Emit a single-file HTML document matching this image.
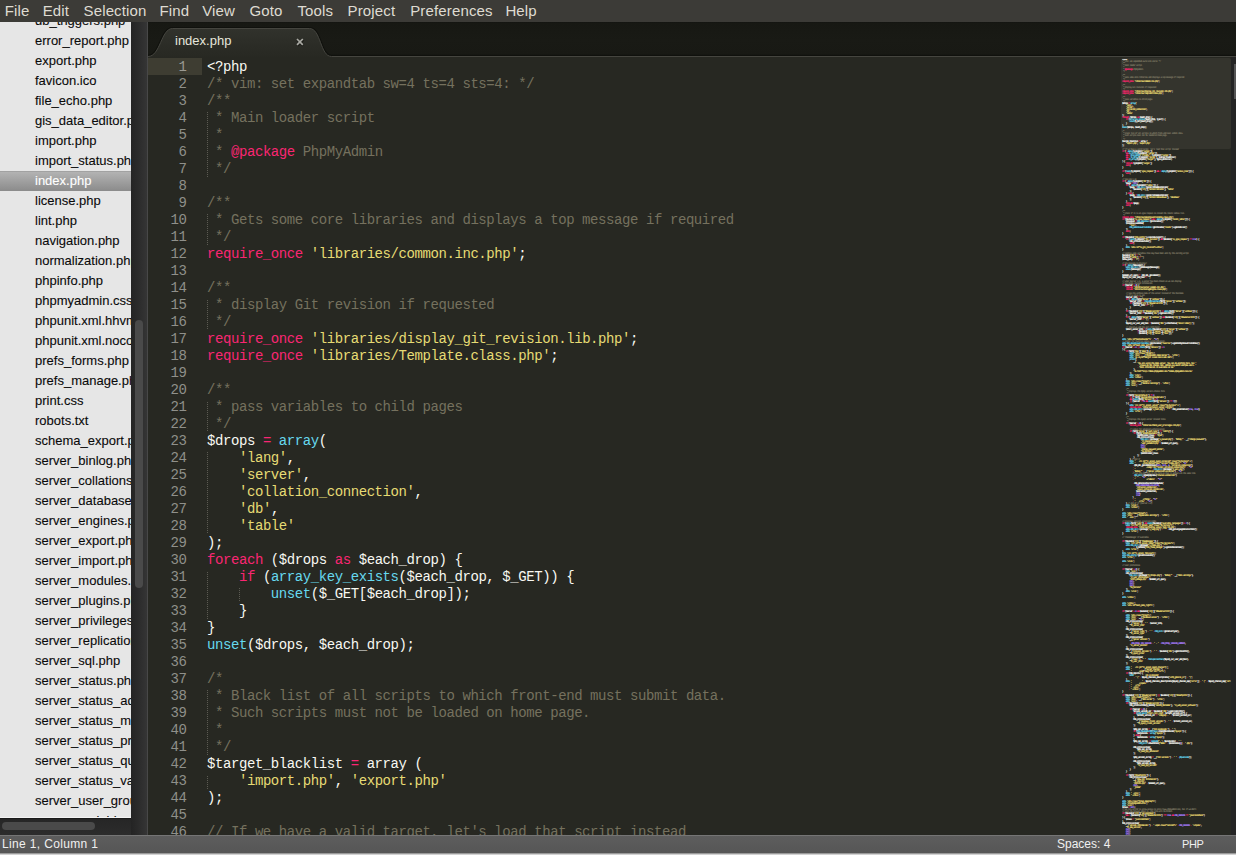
<!DOCTYPE html>
<html><head><meta charset="utf-8">
<style>
*{margin:0;padding:0;box-sizing:border-box}
html,body{width:1236px;height:855px;overflow:hidden;background:#272822}
body{position:relative;font-family:"Liberation Sans",sans-serif}
#menu{position:absolute;left:0;top:0;width:1236px;height:22px;background:#3c3b37}
#menu span{position:absolute;top:0;height:22px;line-height:22px;font-size:15px;letter-spacing:.15px;color:#dfdbd2;white-space:nowrap}
#side{position:absolute;left:0;top:22px;width:131px;height:795px;background:#e6e6e6;overflow:hidden}
#side .row{position:absolute;left:0;width:131px;height:20px;line-height:20px;padding-left:35px;font-size:13px;color:#0a0a0a;-webkit-text-stroke:0.1px #0a0a0a;white-space:nowrap;overflow:hidden}
#side .row.sel{background:linear-gradient(#a2a2a2 0,#a2a2a2 1px,#b3b3b3 1px,#8b8b8b);color:#fff;-webkit-text-stroke:0.1px #fff}
#sidelineW{position:absolute;left:0;top:817px;width:131px;height:1px;background:#f4f4f4}
#vstrip{position:absolute;left:131px;top:22px;width:16px;height:813px;background:linear-gradient(90deg,#242424,#2a2a2a 40%,#353535)}
#vline{position:absolute;left:147px;top:22px;width:1px;height:813px;background:#484848}
#vthumb{position:absolute;left:135px;top:320px;width:8px;height:268px;border-radius:4px;background:#4a4a4a}
#hstrip{position:absolute;left:0;top:818px;width:131px;height:17px;background:linear-gradient(#262626,#2c2c2c);border-top:1px solid #1a1a1a}
#hthumb{position:absolute;left:2px;top:822px;width:93px;height:8px;border-radius:4px;background:#4a4a4a}
#tabbar{position:absolute;left:148px;top:22px;width:1088px;height:36px;background:linear-gradient(#121310 0,#171813 1px,#191a15 50%,#181914 88%,#10110d 96%)}
#tabbar svg{position:absolute;left:0;top:0}
#tabtitle{position:absolute;left:175px;top:31px;height:20px;line-height:20px;font-size:13px;color:#e6e6dc;white-space:nowrap}
#tabx{position:absolute;left:293.5px;top:35.5px;width:12px;height:12px}
#editor{position:absolute;left:148px;top:57px;width:1088px;height:778px;background:#272822;overflow:hidden}
#curline{position:absolute;left:148px;top:58px;width:54px;height:17px;background:#3e3d32}
#gutter{position:absolute;left:148px;top:59px;width:38.5px;font-family:"Liberation Mono",monospace;font-size:14px;letter-spacing:-0.42px;line-height:17px;color:#8f908a;text-align:right}
#gutter .cur{color:#9a9a92}
#code{position:absolute;left:207px;top:59px;font-family:"Liberation Mono",monospace;font-size:14px;letter-spacing:-0.42px;line-height:17px;color:#f8f8f2;white-space:pre}
#code b{font-weight:normal}
.c{color:#75715e}.s{color:#e6db74}.k{color:#f92672}.f{color:#66d9ef}.n{color:#ae81ff}
#guides i{position:absolute;width:1px;background:repeating-linear-gradient(#5c5b53 0 1px,transparent 1px 2px)}
#mmbox{position:absolute;left:1121px;top:58px;width:110px;height:91px;background:#34342d;border-radius:2px}
#mmclip{position:absolute;left:1122px;top:58.5px;width:109px;height:777px;overflow:hidden}
#mmtext{position:absolute;left:0;top:0;font-family:"Liberation Mono",monospace;font-size:2.6px;letter-spacing:-0.62px;line-height:2px;color:#f8f8f2;white-space:pre;text-rendering:geometricPrecision;-webkit-text-stroke-width:0.12px}
#mmtext b{font-weight:normal}
#rscroll{position:absolute;left:1231px;top:57px;width:5px;height:778px;background:#242424}
#rthumb{position:absolute;left:1234px;top:64px;width:2px;height:35px;background:#555}
#status{position:absolute;left:0;top:835px;width:1236px;height:20px;background:linear-gradient(#5d5d5d,#565656 17px,#9a9a9a 17px,#9a9a9a 18px,#d2d2d2 18px);border-top:1px solid #757575}
#status span{position:absolute;top:0;height:17px;line-height:17px;font-size:12px;color:#f0f0f0;white-space:nowrap}
</style></head><body>
<div id="menu"><span style="left:4.8px">File</span><span style="left:42.7px">Edit</span><span style="left:83.5px">Selection</span><span style="left:159.5px">Find</span><span style="left:202.2px">View</span><span style="left:249.4px">Goto</span><span style="left:297.4px">Tools</span><span style="left:347.5px">Project</span><span style="left:410.2px">Preferences</span><span style="left:505.4px">Help</span></div>
<div id="side"><div class="row" style="top:-11px">db_triggers.php</div><div class="row" style="top:9px">error_report.php</div><div class="row" style="top:29px">export.php</div><div class="row" style="top:49px">favicon.ico</div><div class="row" style="top:69px">file_echo.php</div><div class="row" style="top:89px">gis_data_editor.php</div><div class="row" style="top:109px">import.php</div><div class="row" style="top:129px">import_status.php</div><div class="row sel" style="top:149px">index.php</div><div class="row" style="top:169px">license.php</div><div class="row" style="top:189px">lint.php</div><div class="row" style="top:209px">navigation.php</div><div class="row" style="top:229px">normalization.php</div><div class="row" style="top:249px">phpinfo.php</div><div class="row" style="top:269px">phpmyadmin.css.php</div><div class="row" style="top:289px">phpunit.xml.hhvm</div><div class="row" style="top:309px">phpunit.xml.nocoverage</div><div class="row" style="top:329px">prefs_forms.php</div><div class="row" style="top:349px">prefs_manage.php</div><div class="row" style="top:369px">print.css</div><div class="row" style="top:389px">robots.txt</div><div class="row" style="top:409px">schema_export.php</div><div class="row" style="top:429px">server_binlog.php</div><div class="row" style="top:449px">server_collations.php</div><div class="row" style="top:469px">server_databases.php</div><div class="row" style="top:489px">server_engines.php</div><div class="row" style="top:509px">server_export.php</div><div class="row" style="top:529px">server_import.php</div><div class="row" style="top:549px">server_modules.php</div><div class="row" style="top:569px">server_plugins.php</div><div class="row" style="top:589px">server_privileges.php</div><div class="row" style="top:609px">server_replication.php</div><div class="row" style="top:629px">server_sql.php</div><div class="row" style="top:649px">server_status.php</div><div class="row" style="top:669px">server_status_advisor.php</div><div class="row" style="top:689px">server_status_monitor.php</div><div class="row" style="top:709px">server_status_processes.php</div><div class="row" style="top:729px">server_status_queries.php</div><div class="row" style="top:749px">server_status_variables.php</div><div class="row" style="top:769px">server_user_groups.php</div><div class="row" style="top:789px">server_variables.php</div></div>
<div id="sidelineW"></div>
<div id="vstrip"></div><div id="vline"></div><div id="vthumb"></div>
<div id="hstrip"></div><div id="hthumb"></div>
<div id="tabbar"><svg width="1088" height="36" viewBox="0 0 1088 36">
<defs><linearGradient id="tg" x1="0" y1="0" x2="0" y2="1"><stop offset="0" stop-color="#31322c"/><stop offset="1" stop-color="#272822"/></linearGradient></defs>
<path d="M0 34.5 C12.5 34.5 13 6.5 24.5 6.5 L161.5 6.5 C173 6.5 172 34.5 183.5 34.5 L1088 34.5" fill="none" stroke="#10110d" stroke-width="3"/>
<path d="M0 34.5 C12.5 34.5 13 6.5 24.5 6.5 L161.5 6.5 C173 6.5 172 34.5 183.5 34.5 L1088 34.5 L1088 36 L0 36 Z" fill="url(#tg)" stroke="none"/>
<path d="M0 34.5 C12.5 34.5 13 6.5 24.5 6.5 L161.5 6.5 C173 6.5 172 34.5 183.5 34.5 L1088 34.5" fill="none" stroke="#45453f" stroke-width="1"/>
<rect x="0" y="35" width="1088" height="1" fill="#272822"/>
</svg></div>
<div id="tabtitle">index.php</div>
<svg id="tabx" width="12" height="12" viewBox="0 0 12 12"><path d="M3 3L8.8 8.8M8.8 3L3 8.8" stroke="#0f0f0c" stroke-width="2.6" opacity=".5" transform="translate(0.4 0.8)"/><path d="M3 3L8.8 8.8M8.8 3L3 8.8" stroke="#aaaaa4" stroke-width="1.7"/></svg>
<div id="editor"></div>
<div id="curline"></div>
<div id="gutter"><div class="cur">1</div><div>2</div><div>3</div><div>4</div><div>5</div><div>6</div><div>7</div><div>8</div><div>9</div><div>10</div><div>11</div><div>12</div><div>13</div><div>14</div><div>15</div><div>16</div><div>17</div><div>18</div><div>19</div><div>20</div><div>21</div><div>22</div><div>23</div><div>24</div><div>25</div><div>26</div><div>27</div><div>28</div><div>29</div><div>30</div><div>31</div><div>32</div><div>33</div><div>34</div><div>35</div><div>36</div><div>37</div><div>38</div><div>39</div><div>40</div><div>41</div><div>42</div><div>43</div><div>44</div><div>45</div><div>46</div></div>
<div id="guides"><i style="left:207px;top:112px;height:65px"></i><i style="left:207px;top:214px;height:31px"></i><i style="left:207px;top:300px;height:30px"></i><i style="left:207px;top:402px;height:30px"></i><i style="left:207px;top:452px;height:82px"></i><i style="left:207px;top:572px;height:47px"></i><i style="left:207px;top:690px;height:65px"></i><i style="left:207px;top:776px;height:13px"></i><i style="left:239px;top:588px;height:14px"></i></div>
<div id="code"><div>&lt;?php</div><div><b class="c">/* vim: set expandtab sw=4 ts=4 sts=4: */</b></div><div><b class="c">/**</b></div><div><b class="c"> * Main loader script</b></div><div><b class="c"> *</b></div><div><b class="c"> * </b><b class="k">@package</b><b class="c"> PhpMyAdmin</b></div><div><b class="c"> */</b></div><div>&#8203;</div><div><b class="c">/**</b></div><div><b class="c"> * Gets some core libraries and displays a top message if required</b></div><div><b class="c"> */</b></div><div><b class="k">require_once</b> <b class="s">&#x27;libraries/common.inc.php&#x27;</b>;</div><div>&#8203;</div><div><b class="c">/**</b></div><div><b class="c"> * display Git revision if requested</b></div><div><b class="c"> */</b></div><div><b class="k">require_once</b> <b class="s">&#x27;libraries/display_git_revision.lib.php&#x27;</b>;</div><div><b class="k">require_once</b> <b class="s">&#x27;libraries/Template.class.php&#x27;</b>;</div><div>&#8203;</div><div><b class="c">/**</b></div><div><b class="c"> * pass variables to child pages</b></div><div><b class="c"> */</b></div><div>$drops <b class="k">=</b> <b class="f">array</b>(</div><div>    <b class="s">&#x27;lang&#x27;</b>,</div><div>    <b class="s">&#x27;server&#x27;</b>,</div><div>    <b class="s">&#x27;collation_connection&#x27;</b>,</div><div>    <b class="s">&#x27;db&#x27;</b>,</div><div>    <b class="s">&#x27;table&#x27;</b></div><div>);</div><div><b class="k">foreach</b> ($drops <b class="k">as</b> $each_drop) {</div><div>    <b class="k">if</b> (<b class="f">array_key_exists</b>($each_drop, $_GET)) {</div><div>        <b class="f">unset</b>($_GET[$each_drop]);</div><div>    }</div><div>}</div><div><b class="f">unset</b>($drops, $each_drop);</div><div>&#8203;</div><div><b class="c">/*</b></div><div><b class="c"> * Black list of all scripts to which front-end must submit data.</b></div><div><b class="c"> * Such scripts must not be loaded on home page.</b></div><div><b class="c"> *</b></div><div><b class="c"> */</b></div><div>$target_blacklist <b class="k">=</b> array (</div><div>    <b class="s">&#x27;import.php&#x27;</b>, <b class="s">&#x27;export.php&#x27;</b></div><div>);</div><div>&#8203;</div><div><b class="c">// If we have a valid target, let&#x27;s load that script instead</b></div></div>
<div id="mmbox"></div>
<div id="mmclip"><div id="mmtext"><div>&lt;?php</div><div><b class="c">/* vim: set expandtab sw=4 ts=4 sts=4: */</b></div><div><b class="c">/**</b></div><div><b class="c"> * Main loader script</b></div><div><b class="c"> *</b></div><div><b class="c"> * </b><b class="k">@package</b><b class="c"> PhpMyAdmin</b></div><div><b class="c"> */</b></div><div>&#8203;</div><div><b class="c">/**</b></div><div><b class="c"> * Gets some core libraries and displays a top message if required</b></div><div><b class="c"> */</b></div><div><b class="k">require_once</b> <b class="s">&#x27;libraries/common.inc.php&#x27;</b>;</div><div>&#8203;</div><div><b class="c">/**</b></div><div><b class="c"> * display Git revision if requested</b></div><div><b class="c"> */</b></div><div><b class="k">require_once</b> <b class="s">&#x27;libraries/display_git_revision.lib.php&#x27;</b>;</div><div><b class="k">require_once</b> <b class="s">&#x27;libraries/Template.class.php&#x27;</b>;</div><div>&#8203;</div><div><b class="c">/**</b></div><div><b class="c"> * pass variables to child pages</b></div><div><b class="c"> */</b></div><div>$drops <b class="k">=</b> <b class="f">array</b>(</div><div>    <b class="s">&#x27;lang&#x27;</b>,</div><div>    <b class="s">&#x27;server&#x27;</b>,</div><div>    <b class="s">&#x27;collation_connection&#x27;</b>,</div><div>    <b class="s">&#x27;db&#x27;</b>,</div><div>    <b class="s">&#x27;table&#x27;</b></div><div>);</div><div><b class="k">foreach</b> ($drops <b class="k">as</b> $each_drop) {</div><div>    <b class="k">if</b> (<b class="f">array_key_exists</b>($each_drop, $_GET)) {</div><div>        <b class="f">unset</b>($_GET[$each_drop]);</div><div>    }</div><div>}</div><div><b class="f">unset</b>($drops, $each_drop);</div><div>&#8203;</div><div><b class="c">/*</b></div><div><b class="c"> * Black list of all scripts to which front-end must submit data.</b></div><div><b class="c"> * Such scripts must not be loaded on home page.</b></div><div><b class="c"> *</b></div><div><b class="c"> */</b></div><div>$target_blacklist <b class="k">=</b> array (</div><div>    <b class="s">&#x27;import.php&#x27;</b>, <b class="s">&#x27;export.php&#x27;</b></div><div>);</div><div>&#8203;</div><div><b class="c">// If we have a valid target, let&#x27;s load that script instead</b></div><div><b class="k">if</b> (<b class="k">!</b> <b class="f">empty</b>($_REQUEST[<b class="s">&#x27;target&#x27;</b>])</div><div>    <b class="k">&amp;&amp;</b> <b class="f">is_string</b>($_REQUEST[<b class="s">&#x27;target&#x27;</b>])</div><div>    <b class="k">&amp;&amp;</b> <b class="k">!</b> <b class="f">preg_match</b>(<b class="s">&#x27;/^index/&#x27;</b>, $_REQUEST[<b class="s">&#x27;target&#x27;</b>])</div><div>    <b class="k">&amp;&amp;</b> <b class="k">!</b> <b class="f">in_array</b>($_REQUEST[<b class="s">&#x27;target&#x27;</b>], $target_blacklist)</div><div>    <b class="k">&amp;&amp;</b> <b class="f">in_array</b>($_REQUEST[<b class="s">&#x27;target&#x27;</b>], $goto_whitelist)</div><div>) {</div><div>    <b class="k">include</b> $_REQUEST[<b class="s">&#x27;target&#x27;</b>];</div><div>    <b class="k">exit</b>;</div><div>}</div><div>&#8203;</div><div><b class="k">if</b> (<b class="f">isset</b>($_REQUEST[<b class="s">&#x27;ajax_request&#x27;</b>]) <b class="k">&amp;&amp;</b> <b class="k">!</b> <b class="f">empty</b>($_REQUEST[<b class="s">&#x27;access_time&#x27;</b>])) {</div><div>    <b class="k">exit</b>;</div><div>}</div><div>&#8203;</div><div><b class="c">// See FAQ 1.34</b></div><div><b class="k">if</b> (<b class="k">!</b> <b class="f">empty</b>($_REQUEST[<b class="s">&#x27;db&#x27;</b>])) {</div><div>    $page <b class="k">=</b> <b class="n">null</b>;</div><div>    <b class="k">if</b> (<b class="k">!</b> <b class="f">empty</b>($_REQUEST[<b class="s">&#x27;table&#x27;</b>])) {</div><div>        $page <b class="k">=</b> <b class="f">PMA_Util</b>::getScriptNameForOption(</div><div>            $GLOBALS[<b class="s">&#x27;cfg&#x27;</b>][<b class="s">&#x27;DefaultTabTable&#x27;</b>], <b class="s">&#x27;table&#x27;</b></div><div>        );</div><div>    } <b class="k">else</b> {</div><div>        $page <b class="k">=</b> <b class="f">PMA_Util</b>::getScriptNameForOption(</div><div>            $GLOBALS[<b class="s">&#x27;cfg&#x27;</b>][<b class="s">&#x27;DefaultTabDatabase&#x27;</b>], <b class="s">&#x27;database&#x27;</b></div><div>        );</div><div>    }</div><div>    <b class="k">include</b> $page;</div><div>    <b class="k">exit</b>;</div><div>}</div><div>&#8203;</div><div><b class="c">/**</b></div><div><b class="c"> * Check if it is an ajax request to reload the recent tables list.</b></div><div><b class="c"> */</b></div><div><b class="k">require_once</b> <b class="s">&#x27;libraries/RecentFavoriteTable.class.php&#x27;</b>;</div><div><b class="k">if</b> ($GLOBALS[<b class="s">&#x27;is_ajax_request&#x27;</b>] <b class="k">&amp;&amp;</b> <b class="k">!</b> <b class="f">empty</b>($_REQUEST[<b class="s">&#x27;recent_table&#x27;</b>])) {</div><div>    $response <b class="k">=</b> <b class="f">PMA_Response</b>::getInstance();</div><div>    $response-&gt;addJSON(</div><div>        <b class="s">&#x27;list&#x27;</b>,</div><div>        <b class="f">PMA_RecentFavoriteTable</b>::getInstance(<b class="s">&#x27;recent&#x27;</b>)-&gt;getHtmlList()</div><div>    );</div><div>    <b class="k">exit</b>;</div><div>}</div><div>&#8203;</div><div><b class="k">if</b> ($GLOBALS[<b class="s">&#x27;PMA_Config&#x27;</b>]-&gt;isGitRevision()) {</div><div>    <b class="k">if</b> (<b class="f">isset</b>($_REQUEST[<b class="s">&#x27;git_revision&#x27;</b>]) <b class="k">&amp;&amp;</b> $GLOBALS[<b class="s">&#x27;is_ajax_request&#x27;</b>] <b class="k">==</b> <b class="n">true</b>) {</div><div>        PMA_printGitRevision();</div><div>        <b class="k">exit</b>;</div><div>    }</div><div>    <b class="f">echo</b> <b class="s">&#x27;&lt;div id=&quot;is_git_revision&quot;&gt;&lt;/div&gt;&#x27;</b>;</div><div>}</div><div>&#8203;</div><div><b class="c">// Handles some variables that may have been sent by the calling script</b></div><div>$GLOBALS[<b class="s">&#x27;db&#x27;</b>] <b class="k">=</b> <b class="s">&#x27;&#x27;</b>;</div><div>$GLOBALS[<b class="s">&#x27;table&#x27;</b>] <b class="k">=</b> <b class="s">&#x27;&#x27;</b>;</div><div>$show_query <b class="k">=</b> <b class="s">&#x27;1&#x27;</b>;</div><div>&#8203;</div><div><b class="c">// Any message to display?</b></div><div><b class="k">if</b> (<b class="k">!</b> <b class="f">empty</b>($message)) {</div><div>    <b class="f">echo</b> <b class="f">PMA_Util</b>::getMessage($message);</div><div>    <b class="f">unset</b>($message);</div><div>}</div><div>&#8203;</div><div>$common_url_query <b class="k">=</b>  PMA_URL_getCommon();</div><div>$mysql_cur_user_and_host <b class="k">=</b> <b class="s">&#x27;&#x27;</b>;</div><div>&#8203;</div><div><b class="c">// when $server &gt; 0, a server has been chosen so we can display</b></div><div><b class="c">// all MySQL-related information</b></div><div><b class="k">if</b> ($server <b class="k">&gt;</b> <b class="n">0</b>) {</div><div>    <b class="k">include</b> <b class="s">&#x27;libraries/server_common.inc.php&#x27;</b>;</div><div>    <b class="k">include</b> <b class="s">&#x27;libraries/StorageEngine.class.php&#x27;</b>;</div><div>&#8203;</div><div>    <b class="c">// Use the verbose name of the server instead of the hostname</b></div><div>    <b class="c">// if a value is set</b></div><div>    $server_info <b class="k">=</b> <b class="s">&#x27;&#x27;</b>;</div><div>    <b class="k">if</b> (<b class="k">!</b> <b class="f">empty</b>($cfg[<b class="s">&#x27;Server&#x27;</b>][<b class="s">&#x27;verbose&#x27;</b>])) {</div><div>        $server_info <b class="k">.=</b> <b class="f">htmlspecialchars</b>($cfg[<b class="s">&#x27;Server&#x27;</b>][<b class="s">&#x27;verbose&#x27;</b>]);</div><div>        <b class="k">if</b> ($GLOBALS[<b class="s">&#x27;cfg&#x27;</b>][<b class="s">&#x27;ShowServerInfo&#x27;</b>]) {</div><div>            $server_info <b class="k">.=</b> <b class="s">&#x27; (&#x27;</b>;</div><div>        }</div><div>    }</div><div>    <b class="k">if</b> ($GLOBALS[<b class="s">&#x27;cfg&#x27;</b>][<b class="s">&#x27;ShowServerInfo&#x27;</b>] <b class="k">||</b> <b class="f">empty</b>($cfg[<b class="s">&#x27;Server&#x27;</b>][<b class="s">&#x27;verbose&#x27;</b>])) {</div><div>        $server_info <b class="k">.=</b> $GLOBALS[<b class="s">&#x27;dbi&#x27;</b>]-&gt;getHostInfo();</div><div>    }</div><div>    <b class="k">if</b> (<b class="k">!</b> <b class="f">empty</b>($cfg[<b class="s">&#x27;Server&#x27;</b>][<b class="s">&#x27;verbose&#x27;</b>]) <b class="k">&amp;&amp;</b> $GLOBALS[<b class="s">&#x27;cfg&#x27;</b>][<b class="s">&#x27;ShowServerInfo&#x27;</b>]) {</div><div>        $server_info <b class="k">.=</b> <b class="s">&#x27;)&#x27;</b>;</div><div>    }</div><div>    $mysql_cur_user_and_host <b class="k">=</b> $GLOBALS[<b class="s">&#x27;dbi&#x27;</b>]-&gt;fetchValue(<b class="s">&#x27;SELECT USER();&#x27;</b>);</div><div>&#8203;</div><div>    <b class="c">// should we add the port info here?</b></div><div>    $short_server_info <b class="k">=</b> (<b class="k">!</b><b class="f">empty</b>($GLOBALS[<b class="s">&#x27;cfg&#x27;</b>][<b class="s">&#x27;Server&#x27;</b>][<b class="s">&#x27;verbose&#x27;</b>])</div><div>                <b class="k">?</b> $GLOBALS[<b class="s">&#x27;cfg&#x27;</b>][<b class="s">&#x27;Server&#x27;</b>][<b class="s">&#x27;verbose&#x27;</b>]</div><div>                <b class="k">:</b> $GLOBALS[<b class="s">&#x27;cfg&#x27;</b>][<b class="s">&#x27;Server&#x27;</b>][<b class="s">&#x27;host&#x27;</b>]);</div><div>}</div><div>&#8203;</div><div><b class="f">echo</b> <b class="s">&#x27;&lt;div id=&quot;maincontainer&quot;&gt;&#x27;</b> <b class="k">.</b> <b class="s">&quot;</b><b class="n">\n</b><b class="s">&quot;</b>;</div><div><b class="c">// Anchor for favorite tables synchronization.</b></div><div><b class="f">echo</b> <b class="f">PMA_RecentFavoriteTable</b>::getInstance(<b class="s">&#x27;favorite&#x27;</b>)-&gt;getHtmlSyncFavoriteTables();</div><div><b class="f">echo</b> <b class="s">&#x27;&lt;div id=&quot;main_pane_left&quot;&gt;&#x27;</b>;</div><div><b class="k">if</b> ($server <b class="k">&gt;</b> <b class="n">0</b> <b class="k">||</b> <b class="f">count</b>($cfg[<b class="s">&#x27;Servers&#x27;</b>]) <b class="k">&gt;</b> <b class="n">1</b></div><div>) {</div><div>    <b class="k">if</b> ($cfg[<b class="s">&#x27;DBG&#x27;</b>][<b class="s">&#x27;demo&#x27;</b>]) {</div><div>        <b class="f">echo</b> <b class="s">&#x27;&lt;div class=&quot;group&quot;&gt;&#x27;</b>;</div><div>        <b class="f">echo</b> <b class="s">&#x27;&lt;h2&gt;&#x27;</b> <b class="k">.</b> __(<b class="s">&#x27;phpMyAdmin Demo Server&#x27;</b>) <b class="k">.</b> <b class="s">&#x27;&lt;/h2&gt;&#x27;</b>;</div><div>        <b class="f">echo</b> <b class="s">&#x27;&lt;p style=&quot;margin: 0.5em 1em 0.5em 1em&quot;&gt;&#x27;</b>;</div><div>        <b class="f">printf</b>(</div><div>            __(</div><div>                <b class="s">&#x27;You are using the demo server. You can do anything here, but &#x27;</b></div><div>                <b class="k">.</b> <b class="s">&#x27;please do not change root, debian-sys-maint and pma users. &#x27;</b></div><div>                <b class="k">.</b> <b class="s">&#x27;More information is available at %s.&#x27;</b></div><div>            ),</div><div>            <b class="s">&#x27;&lt;a hraf=&quot;xttp://demo.phpmyadmin.net/&quot;&gt;demo.phpmyadmin.net&lt;/a&gt;&#x27;</b></div><div>        );</div><div>        <b class="f">echo</b> <b class="s">&#x27;&lt;/p&gt;&#x27;</b>;</div><div>        <b class="f">echo</b> <b class="s">&#x27;&lt;/div&gt;&#x27;</b>;</div><div>    }</div><div>    <b class="f">echo</b> <b class="s">&#x27;&lt;div class=&quot;group&quot;&gt;&#x27;</b>;</div><div>    <b class="f">echo</b> <b class="s">&#x27;&lt;h2&gt;&#x27;</b> <b class="k">.</b> __(<b class="s">&#x27;General settings&#x27;</b>) <b class="k">.</b> <b class="s">&#x27;&lt;/h2&gt;&#x27;</b>;</div><div>    <b class="f">echo</b> <b class="s">&#x27;&lt;ul&gt;&#x27;</b>;</div><div>&#8203;</div><div>    <b class="c">/**</b></div><div><b class="c">     * Displays the MySQL servers choice form</b></div><div><b class="c">     */</b></div><div>    <b class="k">if</b> ($cfg[<b class="s">&#x27;ServerDefault&#x27;</b>] <b class="k">==</b> <b class="n">0</b></div><div>        <b class="k">||</b> (<b class="k">!</b> $cfg[<b class="s">&#x27;NavigationDisplayServers&#x27;</b>]</div><div>        <b class="k">&amp;&amp;</b> (<b class="f">count</b>($cfg[<b class="s">&#x27;Servers&#x27;</b>]) <b class="k">&gt;</b> <b class="n">1</b></div><div>        <b class="k">||</b> ($server <b class="k">==</b> <b class="n">0</b> <b class="k">&amp;&amp;</b> <b class="f">count</b>($cfg[<b class="s">&#x27;Servers&#x27;</b>]) <b class="k">==</b> <b class="n">1</b>)))</div><div>    ) {</div><div>        <b class="f">echo</b> <b class="s">&#x27;&lt;li id=&quot;li_select_server&quot; class=&quot;no_bullets&quot; &gt;&#x27;</b>;</div><div>        <b class="k">include_once</b> <b class="s">&#x27;libraries/select_server.lib.php&#x27;</b>;</div><div>        <b class="f">echo</b> <b class="f">PMA_Util</b>::getImage(<b class="s">&#x27;s_host.png&#x27;</b>) <b class="k">.</b> <b class="s">&quot; &quot;</b> <b class="k">.</b> PMA_selectServer(<b class="n">true</b>, <b class="n">true</b>);</div><div>        <b class="f">echo</b> <b class="s">&#x27;&lt;/li&gt;&#x27;</b>;</div><div>    }</div><div>&#8203;</div><div>    <b class="c">/**</b></div><div><b class="c">     * Displays the mysql server related links</b></div><div><b class="c">     */</b></div><div>    <b class="k">if</b> ($server <b class="k">&gt;</b> <b class="n">0</b>) {</div><div>        <b class="k">include_once</b> <b class="s">&#x27;libraries/check_user_privileges.lib.php&#x27;</b>;</div><div>&#8203;</div><div>        <b class="c">// Logout for advanced authentication</b></div><div>        <b class="k">if</b> ($cfg[<b class="s">&#x27;Server&#x27;</b>][<b class="s">&#x27;auth_type&#x27;</b>] <b class="k">!=</b> <b class="s">&#x27;config&#x27;</b>) {</div><div>            <b class="k">if</b> ($cfg[<b class="s">&#x27;ShowChgPassword&#x27;</b>]) {</div><div>                $conditional_class <b class="k">=</b> <b class="s">&#x27;ajax&#x27;</b>;</div><div>                PMA_printListItem(</div><div>                    <b class="f">PMA_Util</b>::getImage(<b class="s">&#x27;s_passwd.png&#x27;</b>) <b class="k">.</b> <b class="s">&quot;&amp;nbsp;&quot;</b> <b class="k">.</b> __(<b class="s">&#x27;Change password&#x27;</b>),</div><div>                    <b class="s">&#x27;li_change_password&#x27;</b>,</div><div>                    <b class="s">&#x27;user_password.php&#x27;</b> <b class="k">.</b> $common_url_query,</div><div>                    <b class="n">null</b>,</div><div>                    <b class="n">null</b>,</div><div>                    <b class="s">&#x27;change_password_anchor&#x27;</b>,</div><div>                    <b class="s">&quot;no_bullets&quot;</b>,</div><div>                    $conditional_class</div><div>                );</div><div>            }</div><div>        } <b class="c">// end if</b></div><div>        <b class="f">echo</b> <b class="s">&#x27;    &lt;li id=&quot;li_select_mysql_collation&quot; class=&quot;no_bullets&quot; &gt;&#x27;</b>;</div><div>        <b class="f">echo</b> <b class="s">&#x27;        &lt;form method=&quot;post&quot; action=&quot;index.php&quot;&gt;&#x27;</b> <b class="k">.</b> <b class="s">&quot;</b><b class="n">\n</b><b class="s">&quot;</b></div><div>           <b class="k">.</b> PMA_URL_getHiddenInputs(<b class="n">null</b>, <b class="n">null</b>, <b class="n">4</b>, <b class="s">&#x27;collation_connection&#x27;</b>)</div><div>           <b class="k">.</b> <b class="s">&#x27;            &lt;label for=&quot;select_collation_connection&quot;&gt;&#x27;</b> <b class="k">.</b> <b class="s">&quot;</b><b class="n">\n</b><b class="s">&quot;</b></div><div>           <b class="k">.</b> <b class="s">&#x27;                &#x27;</b> <b class="k">.</b> <b class="f">PMA_Util</b>::getImage(<b class="s">&#x27;s_asci.png&#x27;</b>)</div><div>           <b class="k">.</b> <b class="s">&quot;&amp;nbsp;&quot;</b> <b class="k">.</b> __(<b class="s">&#x27;Server connection collation&#x27;</b>) <b class="k">.</b> <b class="s">&quot;</b><b class="n">\n</b><b class="s">&quot;</b></div><div>           <b class="c">// put the doc link in the form so that it appears on the same line</b></div><div>           <b class="k">.</b> <b class="f">PMA_Util</b>::showMySQLDocu(<b class="s">&#x27;Charset-connection&#x27;</b>)</div><div>           <b class="k">.</b> <b class="s">&#x27;: &#x27;</b> <b class="k">.</b>  <b class="s">&quot;</b><b class="n">\n</b><b class="s">&quot;</b></div><div>           <b class="k">.</b> <b class="s">&#x27;            &lt;/label&gt;&#x27;</b> <b class="k">.</b> <b class="s">&quot;</b><b class="n">\n</b><b class="s">&quot;</b></div><div>&#8203;</div><div>           <b class="k">.</b> PMA_generateCharsetDropdownBox(</div><div>               <b class="n">PMA_CSDROPDOWN_COLLATION</b>,</div><div>               <b class="s">&#x27;collation_connection&#x27;</b>,</div><div>               <b class="s">&#x27;select_collation_connection&#x27;</b>,</div><div>               $collation_connection,</div><div>               <b class="n">true</b>,</div><div>               <b class="n">true</b></div><div>           )</div><div>           <b class="k">.</b> <b class="s">&#x27;        &lt;/form&gt;&#x27;</b> <b class="k">.</b> <b class="s">&quot;</b><b class="n">\n</b><b class="s">&quot;</b></div><div>           <b class="k">.</b> <b class="s">&#x27;    &lt;/li&gt;&#x27;</b> <b class="k">.</b> <b class="s">&quot;</b><b class="n">\n</b><b class="s">&quot;</b>;</div><div>    } <b class="c">// end of if ($server &gt; 0)</b></div><div>    <b class="f">echo</b> <b class="s">&#x27;&lt;/ul&gt;&#x27;</b>;</div><div>    <b class="f">echo</b> <b class="s">&#x27;&lt;/div&gt;&#x27;</b>;</div><div>}</div><div>&#8203;</div><div><b class="f">echo</b> <b class="s">&#x27;&lt;div class=&quot;group&quot;&gt;&#x27;</b>;</div><div><b class="f">echo</b> <b class="s">&#x27;&lt;h2&gt;&#x27;</b> <b class="k">.</b> __(<b class="s">&#x27;Appearance settings&#x27;</b>) <b class="k">.</b> <b class="s">&#x27;&lt;/h2&gt;&#x27;</b>;</div><div><b class="f">echo</b> <b class="s">&#x27;  &lt;ul&gt;&#x27;</b>;</div><div>&#8203;</div><div><b class="c">// Displays language selection combo</b></div><div><b class="k">if</b> (<b class="f">empty</b>($cfg[<b class="s">&#x27;Lang&#x27;</b>]) <b class="k">&amp;&amp;</b> <b class="f">count</b>($GLOBALS[<b class="s">&#x27;available_languages&#x27;</b>]) <b class="k">&gt;</b> <b class="n">1</b>) {</div><div>    <b class="f">echo</b> <b class="s">&#x27;&lt;li id=&quot;li_select_lang&quot; class=&quot;no_bullets&quot;&gt;&#x27;</b>;</div><div>    <b class="k">include_once</b> <b class="s">&#x27;libraries/display_select_lang.lib.php&#x27;</b>;</div><div>    <b class="f">echo</b> <b class="f">PMA_Util</b>::getImage(<b class="s">&#x27;s_lang.png&#x27;</b>) <b class="k">.</b> <b class="s">&quot; &quot;</b> <b class="k">.</b> PMA_getLanguageSelectorHtml();</div><div>    <b class="f">echo</b> <b class="s">&#x27;&lt;/li&gt;&#x27;</b>;</div><div>}</div><div>&#8203;</div><div><b class="c">// ThemeManager if available</b></div><div>&#8203;</div><div><b class="k">if</b> ($GLOBALS[<b class="s">&#x27;cfg&#x27;</b>][<b class="s">&#x27;ThemeManager&#x27;</b>]) {</div><div>    <b class="f">echo</b> <b class="s">&#x27;&lt;li id=&quot;li_select_theme&quot; class=&quot;no_bullets&quot;&gt;&#x27;</b>;</div><div>    <b class="f">echo</b> <b class="f">PMA_Util</b>::getImage(<b class="s">&#x27;s_theme.png&#x27;</b>) <b class="k">.</b> <b class="s">&quot; &quot;</b></div><div>            <b class="k">.</b>  $_SESSION[<b class="s">&#x27;PMA_Theme_Manager&#x27;</b>]-&gt;getHtmlSelectBox();</div><div>    <b class="f">echo</b> <b class="s">&#x27;&lt;/li&gt;&#x27;</b>;</div><div>}</div><div><b class="f">echo</b> <b class="s">&#x27;&lt;li id=&quot;li_select_fontsize&quot;&gt;&#x27;</b>;</div><div><b class="f">echo</b> <b class="f">PMA_Config</b>::getFontsizeForm();</div><div><b class="f">echo</b> <b class="s">&#x27;&lt;/li&gt;&#x27;</b>;</div><div>&#8203;</div><div><b class="f">echo</b> <b class="s">&#x27;&lt;/ul&gt;&#x27;</b>;</div><div>&#8203;</div><div><b class="c">// User preferences</b></div><div>&#8203;</div><div><b class="k">if</b> ($server <b class="k">&gt;</b> <b class="n">0</b>) {</div><div>    <b class="f">echo</b> <b class="s">&#x27;&lt;ul&gt;&#x27;</b>;</div><div>    PMA_printListItem(</div><div>        <b class="f">PMA_Util</b>::getImage(<b class="s">&#x27;b_tblops.png&#x27;</b>) <b class="k">.</b> <b class="s">&quot;&amp;nbsp;&quot;</b> <b class="k">.</b> __(<b class="s">&#x27;More settings&#x27;</b>),</div><div>        <b class="s">&#x27;li_user_preferences&#x27;</b>,</div><div>        <b class="s">&#x27;prefs_manage.php&#x27;</b> <b class="k">.</b> $common_url_query,</div><div>        <b class="n">null</b>,</div><div>        <b class="n">null</b>,</div><div>        <b class="n">null</b>,</div><div>        <b class="s">&quot;no_bullets&quot;</b></div><div>    );</div><div>    <b class="f">echo</b> <b class="s">&#x27;&lt;/ul&gt;&#x27;</b>;</div><div>}</div><div>&#8203;</div><div><b class="f">echo</b> <b class="s">&#x27;&lt;/div&gt;&#x27;</b>;</div><div>&#8203;</div><div>&#8203;</div><div><b class="f">echo</b> <b class="s">&#x27;&lt;/div&gt;&#x27;</b>;</div><div><b class="f">echo</b> <b class="s">&#x27;&lt;div id=&quot;main_pane_right&quot;&gt;&#x27;</b>;</div><div>&#8203;</div><div>&#8203;</div><div><b class="k">if</b> ($server <b class="k">&gt;</b> <b class="n">0</b> <b class="k">&amp;&amp;</b> $GLOBALS[<b class="s">&#x27;cfg&#x27;</b>][<b class="s">&#x27;ShowServerInfo&#x27;</b>]) {</div><div>&#8203;</div><div>    <b class="f">echo</b> <b class="s">&#x27;&lt;div class=&quot;group&quot;&gt;&#x27;</b>;</div><div>    <b class="f">echo</b> <b class="s">&#x27;&lt;h2&gt;&#x27;</b> <b class="k">.</b> __(<b class="s">&#x27;Database server&#x27;</b>) <b class="k">.</b> <b class="s">&#x27;&lt;/h2&gt;&#x27;</b>;</div><div>    <b class="f">echo</b> <b class="s">&#x27;&lt;ul&gt;&#x27;</b> <b class="k">.</b> <b class="s">&quot;</b><b class="n">\n</b><b class="s">&quot;</b>;</div><div>    PMA_printListItem(</div><div>        __(<b class="s">&#x27;Server:&#x27;</b>) <b class="k">.</b> <b class="s">&#x27; &#x27;</b> <b class="k">.</b> $server_info,</div><div>        <b class="s">&#x27;li_server_info&#x27;</b></div><div>    );</div><div>    PMA_printListItem(</div><div>        __(<b class="s">&#x27;Server type:&#x27;</b>) <b class="k">.</b> <b class="s">&#x27; &#x27;</b> <b class="k">.</b> <b class="f">PMA_Util</b>::getServerType(),</div><div>        <b class="s">&#x27;li_server_type&#x27;</b></div><div>    );</div><div>    PMA_printListItem(</div><div>        __(<b class="s">&#x27;Server version:&#x27;</b>)</div><div>        <b class="k">.</b> <b class="s">&#x27; &#x27;</b></div><div>        <b class="k">.</b> <b class="n">PMA_MYSQL_STR_VERSION</b> <b class="k">.</b> <b class="s">&#x27; - &#x27;</b> <b class="k">.</b> <b class="n">PMA_MYSQL_VERSION_COMMENT</b>,</div><div>        <b class="s">&#x27;li_server_version&#x27;</b></div><div>    );</div><div>    PMA_printListItem(</div><div>        __(<b class="s">&#x27;Protocol version:&#x27;</b>) <b class="k">.</b> <b class="s">&#x27; &#x27;</b> <b class="k">.</b> $GLOBALS[<b class="s">&#x27;dbi&#x27;</b>]-&gt;getProtoInfo(),</div><div>        <b class="s">&#x27;li_mysql_proto&#x27;</b></div><div>    );</div><div>    PMA_printListItem(</div><div>        __(<b class="s">&#x27;User:&#x27;</b>) <b class="k">.</b> <b class="s">&#x27; &#x27;</b> <b class="k">.</b> <b class="f">htmlspecialchars</b>($mysql_cur_user_and_host),</div><div>        <b class="s">&#x27;li_user_info&#x27;</b></div><div>    );</div><div>&#8203;</div><div>    <b class="f">echo</b> <b class="s">&#x27;    &lt;li id=&quot;li_select_mysql_charset&quot;&gt;&#x27;</b>;</div><div>    <b class="f">echo</b> <b class="s">&#x27;        &#x27;</b> <b class="k">.</b> __(<b class="s">&#x27;Server charset:&#x27;</b>) <b class="k">.</b> <b class="s">&#x27; &#x27;</b></div><div>       <b class="k">.</b> <b class="s">&#x27;        &lt;span lang=&quot;en&quot; dir=&quot;ltr&quot;&gt;&#x27;</b>;</div><div>    <b class="k">if</b> (PMA_DRIZZLE) {</div><div>        <b class="f">echo</b> <b class="s">&#x27;           UTF-8 Unicode&#x27;</b></div><div>            <b class="k">.</b> <b class="s">&#x27; (&#x27;</b> <b class="k">.</b> $mysql_charsets_descriptions[<b class="s">&#x27;utf8_general_ci&#x27;</b>] <b class="k">.</b> <b class="s">&#x27;)&#x27;</b>;</div><div>    }</div><div>    <b class="f">echo</b> <b class="s">&#x27;           &#x27;</b> <b class="k">.</b> $mysql_charsets_descriptions[$mysql_charset_map[<b class="s">&#x27;utf-8&#x27;</b>]] <b class="k">.</b> <b class="s">&#x27; (&#x27;</b> <b class="k">.</b> $mysql_charset_map[<b class="s">&#x27;utf-8&#x27;</b>] <b class="k">.</b> <b class="s">&#x27;)&#x27;</b></div><div>       <b class="k">.</b> <b class="s">&#x27;        &lt;/span&gt;&#x27;</b></div><div>       <b class="k">.</b> <b class="s">&#x27;    &lt;/li&gt;&#x27;</b></div><div>       <b class="k">.</b> <b class="s">&#x27;  &lt;/ul&gt;&#x27;</b></div><div>       <b class="k">.</b> <b class="s">&#x27; &lt;/div&gt;&#x27;</b>;</div><div>}</div><div>&#8203;</div><div><b class="k">if</b> ($GLOBALS[<b class="s">&#x27;cfg&#x27;</b>][<b class="s">&#x27;ShowServerInfo&#x27;</b>] <b class="k">||</b> $GLOBALS[<b class="s">&#x27;cfg&#x27;</b>][<b class="s">&#x27;ShowPhpInfo&#x27;</b>]) {</div><div>    <b class="f">echo</b> <b class="s">&#x27;&lt;div class=&quot;group&quot;&gt;&#x27;</b>;</div><div>    <b class="f">echo</b> <b class="s">&#x27;&lt;h2&gt;&#x27;</b> <b class="k">.</b> __(<b class="s">&#x27;Web server&#x27;</b>) <b class="k">.</b> <b class="s">&#x27;&lt;/h2&gt;&#x27;</b>;</div><div>    <b class="f">echo</b> <b class="s">&#x27;&lt;ul&gt;&#x27;</b>;</div><div>    <b class="k">if</b> ($GLOBALS[<b class="s">&#x27;cfg&#x27;</b>][<b class="s">&#x27;ShowServerInfo&#x27;</b>]) {</div><div>        PMA_printListItem($_SERVER[<b class="s">&#x27;SERVER_SOFTWARE&#x27;</b>], <b class="s">&#x27;li_web_server_software&#x27;</b>);</div><div>&#8203;</div><div>        <b class="k">if</b> ($server <b class="k">&gt;</b> <b class="n">0</b>) {</div><div>            $client_version_str <b class="k">=</b> $GLOBALS[<b class="s">&#x27;dbi&#x27;</b>]-&gt;getClientInfo();</div><div>            <b class="k">if</b> (<b class="f">preg_match</b>(<b class="s">&#x27;#\d+\.\d+\.\d+#&#x27;</b>, $client_version_str)) {</div><div>                $client_version_str <b class="k">=</b> <b class="s">&#x27;libmysql - &#x27;</b> <b class="k">.</b> $client_version_str;</div><div>            }</div><div>            PMA_printListItem(</div><div>                __(<b class="s">&#x27;Database client version:&#x27;</b>) <b class="k">.</b> <b class="s">&#x27; &#x27;</b> <b class="k">.</b> $client_version_str,</div><div>                <b class="s">&#x27;li_mysql_client_version&#x27;</b></div><div>            );</div><div>&#8203;</div><div>            $php_ext_string <b class="k">=</b> __(<b class="s">&#x27;PHP extension:&#x27;</b>) <b class="k">.</b> <b class="s">&#x27; &#x27;</b>;</div><div>            <b class="k">if</b> (<b class="f">PMA_DatabaseInterface</b>::checkDbExtension(<b class="s">&#x27;mysqli&#x27;</b>)) {</div><div>                $extensions <b class="k">=</b> <b class="f">array</b>(<b class="s">&#x27;mysqli&#x27;</b>);</div><div>            } <b class="k">else</b> {</div><div>                $extensions <b class="k">=</b> <b class="f">array</b>(<b class="s">&#x27;mysql&#x27;</b>);</div><div>            }</div><div>            $php_ext_string <b class="k">.=</b> <b class="f">implode</b>(<b class="s">&#x27;, &#x27;</b>, $extensions) <b class="k">.</b> <b class="s">&#x27; &#x27;</b></div><div>                <b class="k">.</b> <b class="f">PMA_Util</b>::showPHPDocu(<b class="s">&#x27;book.&#x27;</b> <b class="k">.</b> $extensions[<b class="n">0</b>] <b class="k">.</b> <b class="s">&#x27;.php&#x27;</b>);</div><div>&#8203;</div><div>            PMA_printListItem(</div><div>                $php_ext_string,</div><div>                <b class="s">&#x27;li_used_php_extension&#x27;</b></div><div>            );</div><div>&#8203;</div><div>            $php_version_string <b class="k">=</b> __(<b class="s">&#x27;PHP version:&#x27;</b>) <b class="k">.</b> <b class="s">&#x27; &#x27;</b> <b class="k">.</b> <b class="f">phpversion</b>();</div><div>&#8203;</div><div>            PMA_printListItem(</div><div>                $php_version_string,</div><div>                <b class="s">&#x27;li_used_php_version&#x27;</b></div><div>            );</div><div>        }</div><div>    }</div><div>&#8203;</div><div>    <b class="k">if</b> ($cfg[<b class="s">&#x27;ShowPhpInfo&#x27;</b>]) {</div><div>        PMA_printListItem(</div><div>            __(<b class="s">&#x27;Show PHP information&#x27;</b>),</div><div>            <b class="s">&#x27;li_phpinfo&#x27;</b>,</div><div>            <b class="s">&#x27;phpinfo.php&#x27;</b> <b class="k">.</b> $common_url_query,</div><div>            <b class="n">null</b>,</div><div>            <b class="s">&#x27;_blank&#x27;</b></div><div>        );</div><div>    }</div><div>    <b class="f">echo</b> <b class="s">&#x27;  &lt;/ul&gt;&#x27;</b>;</div><div>    <b class="f">echo</b> <b class="s">&#x27; &lt;/div&gt;&#x27;</b>;</div><div>}</div><div>&#8203;</div><div><b class="f">echo</b> <b class="s">&#x27;&lt;div class=&quot;group pmagroup&quot;&gt;&#x27;</b>;</div><div><b class="f">echo</b> <b class="s">&#x27;&lt;h2&gt;phpMyAdmin&lt;/h2&gt;&#x27;</b>;</div><div><b class="f">echo</b> <b class="s">&#x27;&lt;ul&gt;&#x27;</b>;</div><div>$class <b class="k">=</b> <b class="n">null</b>;</div><div><b class="c">// We rely on CSP to allow access to xttp://www.phpmyadmin.net, but if we don&#x27;t</b></div><div><b class="c">// tell the browser about it, the link will be broken</b></div><div><b class="k">if</b> ($GLOBALS[<b class="s">&#x27;cfg&#x27;</b>][<b class="s">&#x27;VersionCheck&#x27;</b>]</div><div>    <b class="k">&amp;&amp;</b> <b class="k">!</b> ($GLOBALS[<b class="s">&#x27;cfg&#x27;</b>][<b class="s">&#x27;ShowServerInfo&#x27;</b>] <b class="k">==</b><b class="k">=</b> <b class="n">true</b> <b class="k">&amp;&amp;</b> <b class="n">PMA_VERSION</b> <b class="k">==</b> <b class="s">&#x27;jsversioncheck&#x27;</b>)</div><div>) {</div><div>    $class <b class="k">=</b> <b class="s">&#x27;jsversioncheck&#x27;</b>;</div><div>}</div><div>PMA_printListItem(</div><div>    __(<b class="s">&#x27;Version information:&#x27;</b>) <b class="k">.</b> <b class="s">&#x27; &lt;span class=&quot;version&quot;&gt;&#x27;</b> <b class="k">.</b> <b class="n">PMA_VERSION</b> <b class="k">.</b> <b class="s">&#x27;&lt;/span&gt;&#x27;</b>,</div><div>    <b class="s">&#x27;li_pma_version&#x27;</b>,</div><div>    <b class="n">null</b>,</div><div>    <b class="n">null</b>,</div><div>    <b class="n">null</b>,</div><div>    <b class="n">null</b>,</div><div>    $class</div><div>);</div></div></div>
<div id="rscroll"></div><div id="rthumb"></div>
<div id="status"><span style="left:2px;letter-spacing:.35px">Line 1, Column 1</span><span style="left:1057px">Spaces: 4</span><span style="left:1182px;font-size:11px;letter-spacing:-.4px">PHP</span></div>
</body></html>
